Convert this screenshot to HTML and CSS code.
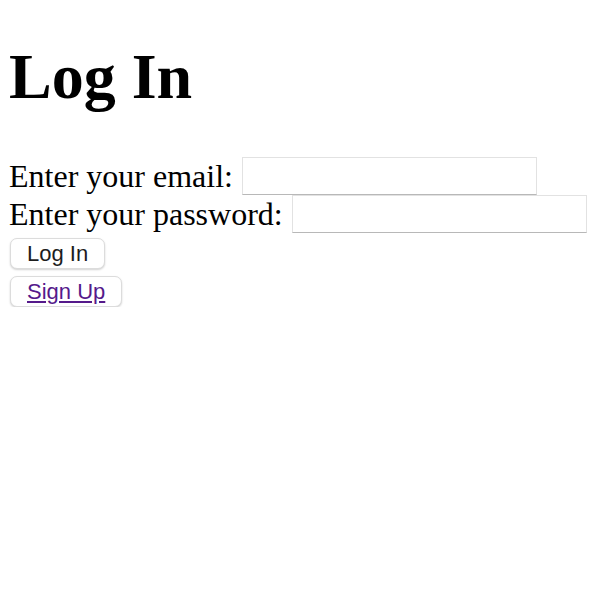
FILE: index.html
```html
<!DOCTYPE html>
<html>
<head>
<meta charset="utf-8">
<link rel="stylesheet" href="styles.css">
</head>
<body>
<h1 class="title">Log In</h1>
<form class="login">
  <div class="row"><label class="label">Enter your email:</label><input class="field" type="email"></div>
  <div class="row"><label class="label">Enter your password:</label><input class="field" type="password"></div>
  <div class="actions">
    <button class="btn" type="button">Log In</button>
    <button class="btn" type="button"><a class="link" href="#signup">Sign Up</a></button>
  </div>
</form>
</body>
</html>
```

FILE: styles.css
```css
html, body {
  background: #fff;
}
body {
  margin: 0;
  padding: 0 9px;
  font-family: "Liberation Serif", "Times New Roman", serif;
  font-size: 32px;
  color: #000;
}
.title {
  font-size: 64px;
  font-weight: bold;
  line-height: 74px;
  margin: 40px 0 43px;
}
.login {
  display: flex;
  flex-direction: column;
  align-items: flex-start;
}
.row {
  display: flex;
  align-items: center;
  gap: 9px;
  height: 38px;
}
.label {
  line-height: 38px;
}
.field {
  box-sizing: border-box;
  width: 295px;
  height: 38px;
  margin: 0;
  padding: 0;
  border: 1px solid #e2e2e2;
  border-bottom-color: #b8b8b8;
  background: #fff;
  border-radius: 0;
  outline: none;
}
.actions {
  display: flex;
  flex-direction: column;
  align-items: flex-start;
  gap: 7px;
  margin-top: 5px;
  padding-left: 1px;
}
.btn {
  box-sizing: border-box;
  height: 31px;
  margin: 0;
  padding: 0 16px;
  font-family: "Liberation Sans", Arial, sans-serif;
  font-size: 22px;
  line-height: 29px;
  color: #1d1d1d;
  background: #fff;
  border: 1px solid #dcdcdc;
  border-radius: 7px;
  box-shadow: 0 1px 2px rgba(0, 0, 0, 0.18);
}
.link {
  color: #551a8b;
  text-decoration: underline;
}
```
